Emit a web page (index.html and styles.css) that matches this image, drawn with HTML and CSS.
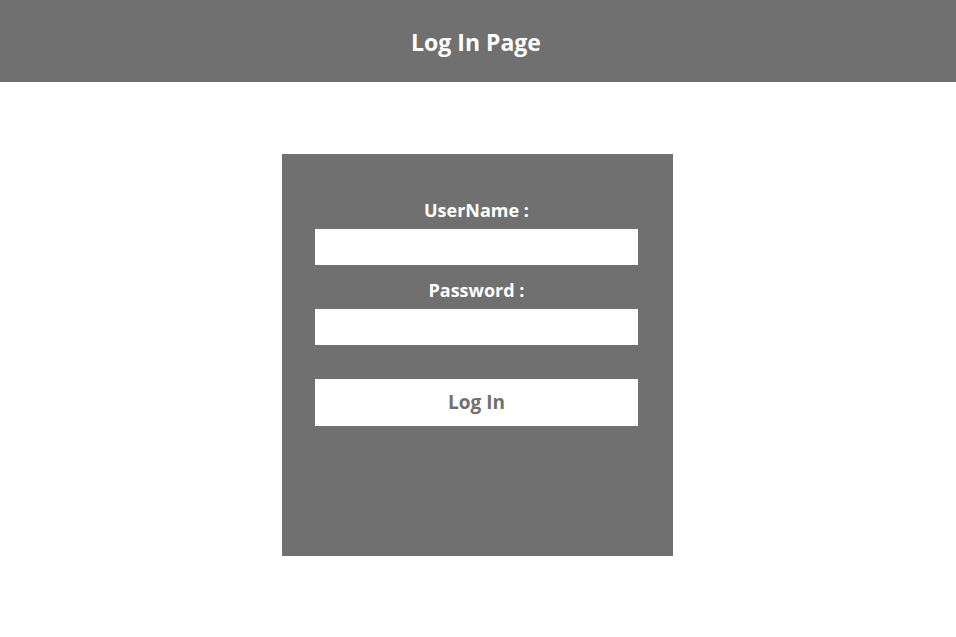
FILE: index.html
```html
<!DOCTYPE html>
<html>
<head>
<meta charset="utf-8">
<title>Log In Page</title>
<link rel="stylesheet" href="styles.css">
</head>
<body>
<header class="topbar"><h1 class="title">Log In Page</h1></header>
<main class="main">
  <form class="card">
    <label class="label" for="user">UserName :</label>
    <input class="field" id="user" type="text">
    <label class="label label-pass" for="pass">Password :</label>
    <input class="field" id="pass" type="password">
    <button class="btn" type="button">Log In</button>
  </form>
</main>
</body>
</html>
```
FILE: styles.css
```css
* { box-sizing: border-box; }
body {
  margin: 0;
  background: #fff;
  font-family: "Open Sans", "Lato", sans-serif;
}
.topbar {
  height: 82px;
  background: #707070;
  display: flex;
  align-items: center;
  justify-content: center;
  padding-right: 4px;
}
.title {
  margin: 0;
  color: #fff;
  font-size: 23px;
  font-weight: 700;
  line-height: 30px;
  padding-top: 1px;
}
.main {
  display: flex;
  justify-content: center;
  padding: 72px 1px 0 0;
}
.card {
  width: 391px;
  height: 402px;
  background: #707070;
  display: flex;
  flex-direction: column;
  align-items: center;
  padding: 46px 35px 0 33px;
}
.label {
  display: block;
  color: #fff;
  font-size: 18px;
  font-weight: 700;
  line-height: 20px;
  margin-bottom: 9px;
  text-align: center;
}
.label-pass { margin-top: 15px; }
.field {
  width: 323px;
  height: 36px;
  border: 0;
  margin: 0;
  background: #fff;
  outline: none;
}
.btn {
  width: 323px;
  height: 47px;
  margin-top: 34px;
  border: 0;
  background: #fff;
  color: #707070;
  font-family: inherit;
  font-size: 19px;
  font-weight: 700;
  line-height: 47px;
  padding: 0;
  cursor: pointer;
}
```
